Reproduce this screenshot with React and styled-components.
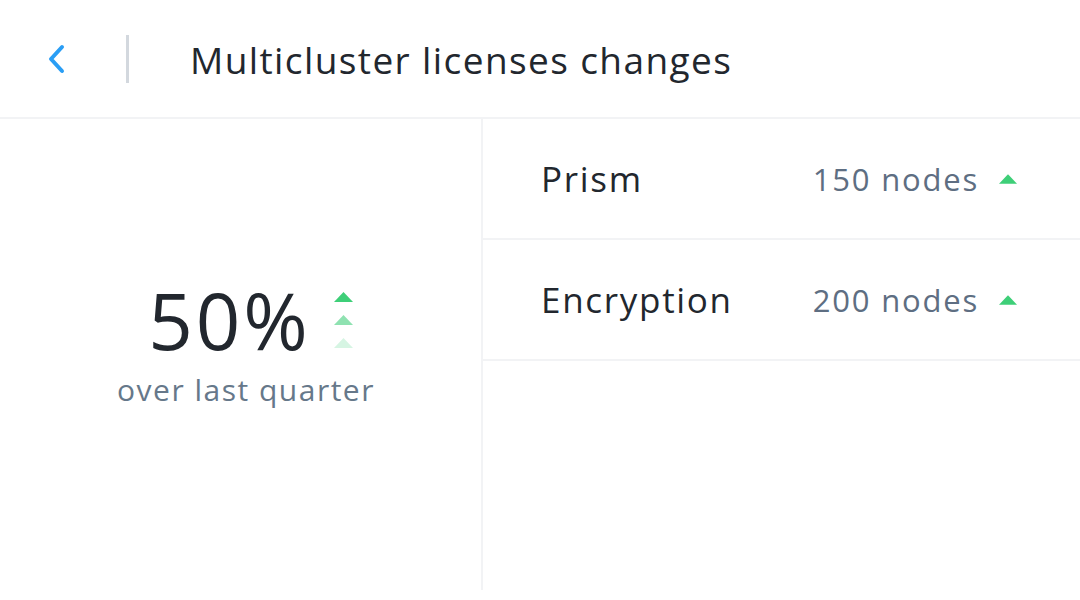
import React from 'react';
import styled, { createGlobalStyle } from 'styled-components';

const GlobalStyle = createGlobalStyle`
    body {
        margin: 0;
        background: #ffffff;
        font-family: "Open Sans", "Noto Sans", sans-serif;
        color: #22272e;
    }
`;

const Page = styled.div`
    width: 1080px;
    height: 590px;
    display: flex;
    flex-direction: column;
`;

const Header = styled.div`
    height: 117px;
    display: flex;
    align-items: center;
    border-bottom: 2px solid #f2f3f5;
    box-sizing: content-box;
`;

const BackButton = styled.button`
    width: 126px;
    height: 100%;
    padding: 0 0 0 46px;
    border: none;
    background: none;
    display: flex;
    align-items: center;
    cursor: pointer;
`;

const Divider = styled.div`
    width: 3px;
    height: 48px;
    background: #d3d8de;
`;

const Title = styled.h1`
    margin: 2px 0 0 61px;
    font-size: 37px;
    font-weight: 400;
    letter-spacing: 1.4px;
    color: #22272e;
`;

const Body = styled.div`
    flex: 1;
    display: flex;
`;

const Summary = styled.div`
    width: 481px;
    border-right: 2px solid #f2f3f5;
    display: flex;
    flex-direction: column;
    align-items: center;
    justify-content: center;
    padding-bottom: 18px;
`;

const BigRow = styled.div`
    display: flex;
    align-items: center;
    margin-left: 20px;
`;

const Percent = styled.div`
    font-size: 78px;
    line-height: 1;
    letter-spacing: 3px;
    color: #22272e;
`;

const Arrows = styled.div`
    display: flex;
    flex-direction: column;
    gap: 13px;
    margin-left: 23px;
    margin-bottom: 1px;
`;

const Caption = styled.div`
    font-size: 30px;
    letter-spacing: 1.5px;
    color: #66788a;
    margin-top: 10px;
    padding-left: 11px;
`;

const List = styled.div`
    flex: 1;
    display: flex;
    flex-direction: column;
`;

const Row = styled.div`
    height: 119px;
    display: flex;
    align-items: center;
    padding: 0 63px 0 58px;
    border-bottom: 2px solid #f2f3f5;
`;

const Name = styled.div`
    flex: 1;
    font-size: 35px;
    letter-spacing: 1.7px;
    color: #22272e;
`;

const Value = styled.div`
    font-size: 31px;
    letter-spacing: 1.8px;
    color: #5e6e82;
    margin-right: 20px;
`;

function Triangle({ color, width = 19 }) {
    return (
        <svg width={width} height="10" viewBox="0 0 19 10">
            <polygon points="9.5,0 19,10 0,10" fill={color} />
        </svg>
    );
}

const rows = [
    { name: 'Prism', value: '150 nodes' },
    { name: 'Encryption', value: '200 nodes' },
];

function App() {
    return (
        <Page>
            <GlobalStyle />
            <Header>
                <BackButton>
                    <svg width="22" height="32" viewBox="0 0 22 32">
                        <path d="M16 4 L5 16 L16 28" fill="none" stroke="#2a9ef5" strokeWidth="4" strokeLinecap="round" strokeLinejoin="round" />
                    </svg>
                </BackButton>
                <Divider />
                <Title>Multicluster licenses changes</Title>
            </Header>
            <Body>
                <Summary>
                    <BigRow>
                        <Percent>50%</Percent>
                        <Arrows>
                            <Triangle color="#3ecf78" />
                            <Triangle color="#8fe2b1" />
                            <Triangle color="#d6f5e3" />
                        </Arrows>
                    </BigRow>
                    <Caption>over last quarter</Caption>
                </Summary>
                <List>
                    {rows.map((r) => (
                        <Row key={r.name}>
                            <Name>{r.name}</Name>
                            <Value>{r.value}</Value>
                            <Triangle color="#3ecf78" width={18} />
                        </Row>
                    ))}
                </List>
            </Body>
        </Page>
    );
}

export default App;
